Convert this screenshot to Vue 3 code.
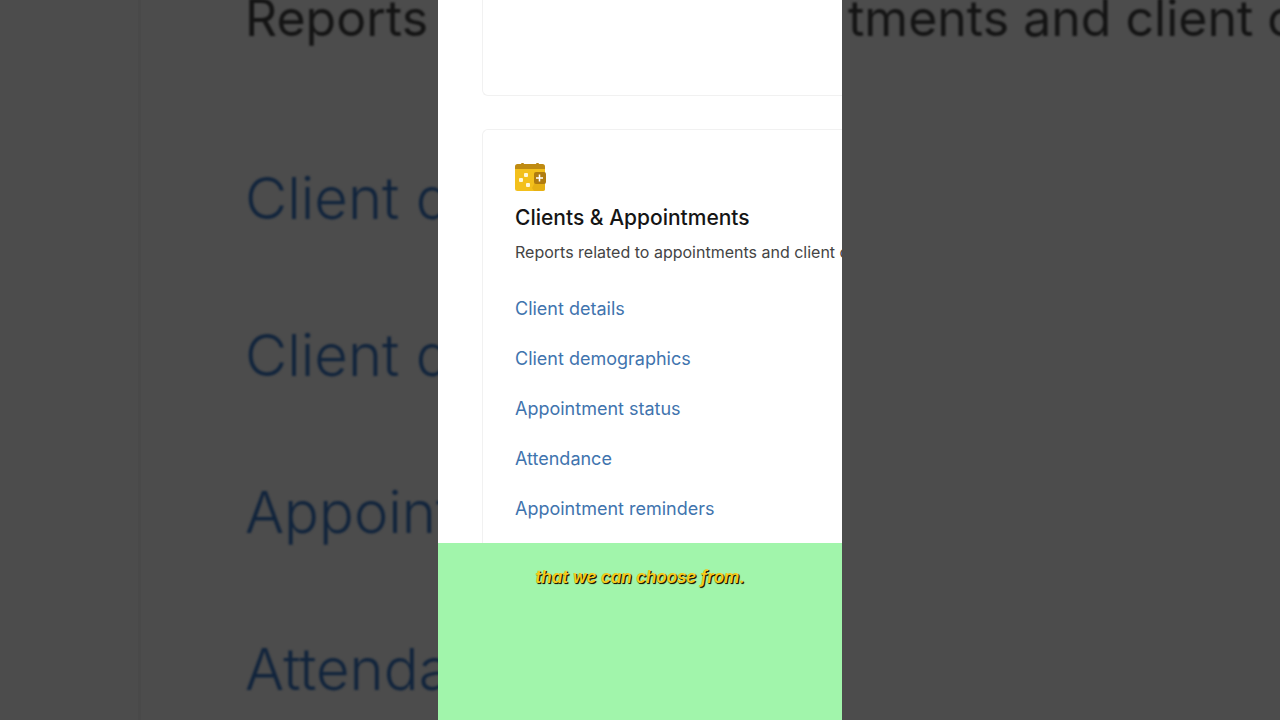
<script setup>
const reports = [
  'Client details',
  'Client demographics',
  'Appointment status',
  'Attendance',
  'Appointment reminders',
]
const enlarged = ['Client d', 'Client d', 'Appoint', 'Attenda']
</script>

<template>
  <div class="stage">
    <div class="side side-left" aria-hidden="true">
      <div class="large-card">
        <p class="large-text">Reports</p>
        <ul class="large-list">
          <li v-for="(name, index) in enlarged" :key="index">{{ name }}</li>
        </ul>
      </div>
    </div>

    <main class="phone">
      <div class="page">
        <section class="card previous" aria-label="Previous reports"></section>
        <section class="card">
          <svg class="icon" viewBox="0 0 32 32" aria-hidden="true">
            <rect x="6" y="1" width="3" height="4" rx="1" fill="#b88512" />
            <rect x="21" y="1" width="3" height="4" rx="1" fill="#b88512" />
            <path d="M0 6h30v20.500a2.500 2.500 0 0 1-2.500 2.500h-25A2.500 2.500 0 0 1 0 26.500z" fill="#f3c01c" />
            <path d="M0 7V4.500Q0 2 2.500 2h25Q30 2 30 4.500V7z" fill="#bf8b12" />
            <path d="M30 19v7.500a2.500 2.500 0 0 1-2.500 2.500H19l-2-3 3-6z" fill="#e6b014" />
            <rect x="9" y="11" width="4" height="4" rx="1" fill="#fff8dc" />
            <rect x="4" y="16" width="4" height="4" rx="1" fill="#fff8dc" />
            <rect x="11" y="21" width="4" height="4" rx="1" fill="#fff8dc" />
            <rect x="19" y="10" width="12" height="12" rx="2" fill="#b07c10" />
            <path d="M24.500 12.500v7M21 16h7" stroke="#fff" stroke-width="1.500" />
          </svg>
          <h1>Clients &amp; Appointments</h1>
          <p class="description">Reports related to appointments and client d</p>
          <ul class="links">
            <li v-for="name in reports" :key="name"><a href="#">{{ name }}</a></li>
          </ul>
        </section>
      </div>
      <div class="caption"><p>that we can choose from.</p></div>
    </main>

    <div class="side side-right" aria-hidden="true">
      <p class="large-text">tments and client d</p>
    </div>
  </div>
</template>

<style>
body {
  margin: 0;
  background: #4c4c4c;
}
</style>

<style scoped>
.stage {
  display: grid;
  grid-template-columns: minmax(0, 1fr) 404px minmax(0, 1fr);
  height: 100vh;
  overflow: hidden;
  font-family: Inter, "Liberation Sans", sans-serif;
}
h1, p, ul {
  margin: 0;
  padding: 0;
}
ul {
  list-style: none;
}
.side {
  overflow: hidden;
  background: #4c4c4c;
  white-space: nowrap;
}
.large-card {
  box-sizing: border-box;
  min-height: 100%;
  margin-left: 138px;
  padding-left: 104px;
  border-left: 3px solid #494949;
}
.large-text {
  font-size: 50px;
  line-height: 36px;
  color: #141414;
  filter: blur(1px);
}
.side-right .large-text {
  padding-left: 6px;
}
.large-list {
  padding-top: 84px;
  font-size: 58px;
  line-height: 157px;
  font-weight: 300;
  color: #11243c;
  filter: blur(1px);
}
.phone {
  display: flex;
  flex-direction: column;
  min-height: 0;
  overflow: hidden;
  background: #fff;
}
.page {
  flex: 1;
  min-height: 0;
  padding-left: 44px;
  overflow: hidden;
  white-space: nowrap;
}
.card {
  padding: 32px;
  border: 1px solid #f1f1f1;
  border-right: 0;
  border-radius: 6px 0 0 6px;
}
.previous {
  height: 31px;
  margin-bottom: 33px;
  border-top: 0;
  border-top-left-radius: 0;
}
.icon {
  display: block;
  width: 32px;
  height: 32px;
}
h1 {
  margin-top: 10px;
  font-size: 21px;
  line-height: 28px;
  font-weight: 500;
  color: #151515;
}
.description {
  margin-top: 8px;
  font-size: 16px;
  line-height: 24px;
  color: #444;
}
.links {
  margin-top: 20px;
  font-size: 18px;
  line-height: 50px;
}
.links a {
  color: #3f74ae;
  text-decoration: none;
}
.caption {
  flex: none;
  height: 153px;
  padding-top: 24px;
  background: #a1f5ab;
  text-align: center;
}
.caption p {
  font-size: 17px;
  line-height: 20px;
  font-weight: 600;
  font-style: italic;
  font-feature-settings: "cv11";
  color: #f5cb1c;
  text-shadow: 1px 1px 0 #1c1a05, 1px 1px 1px #1c1a05;
}
</style>
